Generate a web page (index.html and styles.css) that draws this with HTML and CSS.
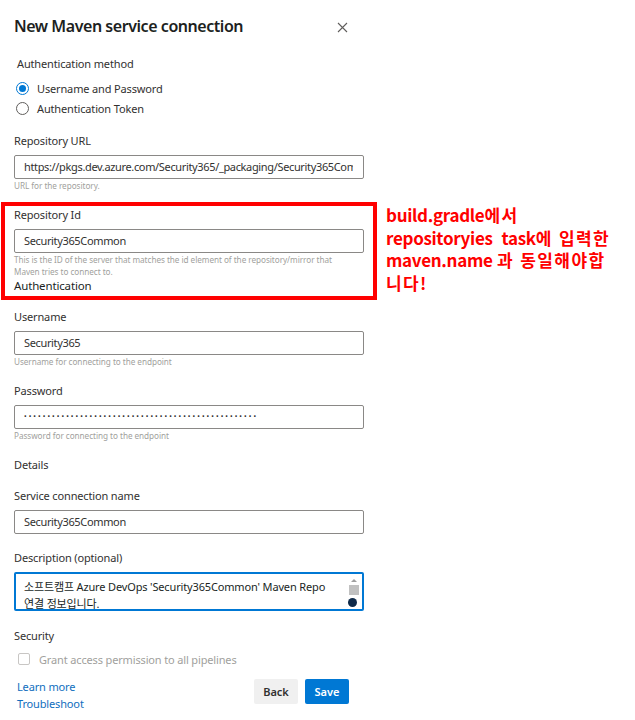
FILE: index.html
```html
<!DOCTYPE html>
<html lang="ko">
<head>
<meta charset="utf-8">
<title>New Maven service connection</title>
<link rel="stylesheet" href="styles.css">
</head>
<body>
<div class="page">
  <div class="dialog">
    <header class="head">
      <h1 class="title">New Maven service connection</h1>
      <span class="close"><svg width="11" height="11" viewBox="0 0 11 11"><path d="M1 1L10 10M10 1L1 10" stroke="#605e5c" stroke-width="1.1" fill="none"/></svg></span>
    </header>

    <div class="group-label">Authentication method</div>
    <div class="radios">
      <div class="radio on"><span class="circle"></span>Username and Password</div>
      <div class="radio"><span class="circle"></span>Authentication Token</div>
    </div>

    <div class="field f-url">
      <div class="label">Repository URL</div>
      <div class="input"><span class="val">https://pkgs.dev.azure.com/Security365/_packaging/Security365Common/maven/v1</span></div>
      <div class="help">URL for the repository.</div>
    </div>

    <div class="field f-id">
      <div class="label">Repository Id</div>
      <div class="input"><span class="val">Security365Common</span></div>
      <div class="help">This is the ID of the server that matches the id element of the repository/mirror that<br>Maven tries to connect to.</div>
      <div class="sub-head">Authentication</div>
    </div>

    <div class="field f-user">
      <div class="label">Username</div>
      <div class="input"><span class="val">Security365</span></div>
      <div class="help">Username for connecting to the endpoint</div>
    </div>

    <div class="field f-pass">
      <div class="label">Password</div>
      <div class="input dots"><span class="val">••••••••••••••••••••••••••••••••••••••••••••••••••</span></div>
      <div class="help">Password for connecting to the endpoint</div>
    </div>

    <div class="group-label plain f-details">Details</div>

    <div class="field f-name">
      <div class="label">Service connection name</div>
      <div class="input"><span class="val">Security365Common</span></div>
    </div>

    <div class="field f-desc">
      <div class="label">Description (optional)</div>
      <div class="textarea">
        <div class="ta-text">소프트캠프 Azure DevOps 'Security365Common' Maven Repo<br>연결 정보입니다.<br><span class="caret"></span></div>
        <div class="scroll">
          <span class="arrow"></span>
          <span class="thumb"></span>
          <span class="blob"></span>
        </div>
      </div>
    </div>

    <div class="group-label plain f-sec">Security</div>
    <div class="check"><span class="box"></span>Grant access permission to all pipelines</div>

    <footer class="foot">
      <div class="links">
        <a class="link">Learn more</a>
        <a class="link">Troubleshoot</a>
      </div>
      <div class="buttons">
        <button class="btn back">Back</button>
        <button class="btn save">Save</button>
      </div>
    </footer>
  </div>

  <div class="mark"></div>
  <div class="note">build.gradle<span class="ko">에서</span><br>repositoryies&nbsp; task<span class="ko">에 입력한</span><br>maven.name <span class="ko">과 동일해야합</span><br><span class="ko">니다</span>!</div>
</div>
</body>
</html>
```

FILE: styles.css
```css
* { box-sizing: border-box; }
html, body { margin: 0; padding: 0; background: #fff; }
body { font-family: "Noto Sans", "Noto Sans CJK KR", sans-serif; color: #323130; letter-spacing: -0.15px; }

.page { position: relative; width: 635px; height: 720px; overflow: hidden; }

.dialog { width: 380px; padding-left: 14px; display: flex; flex-direction: column; }

.head { display: flex; justify-content: space-between; align-items: flex-start; width: 350px; }
.title { margin: 14px 0 0; font-size: 16px; line-height: 24px; font-weight: 600; color: #201f1e; letter-spacing: -0.45px; }
.close { margin-top: 22px; margin-right: 16px; width: 11px; height: 11px; display: flex; }

.group-label { margin-top: 18px; padding-left: 3px; font-size: 11px; line-height: 16px; }
.group-label.plain { padding-left: 0; }

.radios { margin-top: 6px; padding-left: 2px; display: flex; flex-direction: column; }
.radio { height: 20px; display: flex; align-items: center; font-size: 11px; }
.radio .circle { width: 13px; height: 13px; border-radius: 50%; border: 1px solid #605e5c; margin-right: 8px; position: relative; flex: none; }
.radio.on .circle { border-color: #0078d4; }
.radio.on .circle::after { content: ""; position: absolute; left: 2px; top: 2px; width: 7px; height: 7px; border-radius: 50%; background: #0078d4; }

.field { display: flex; flex-direction: column; width: 350px; }
.label { font-size: 11px; line-height: 16px; }
.input { margin-top: 6px; height: 24px; border: 1px solid #8a8886; border-radius: 2px; padding: 0 10px 0 9px; font-size: 11px; line-height: 22px; color: #323130; letter-spacing: -0.35px; display: flex; }
.input .val { flex: 1; min-width: 0; white-space: nowrap; overflow: hidden; }
.input.dots { font-size: 7px; letter-spacing: 2.05px; line-height: 22px; }
.help { margin-top: 1px; font-size: 8.2px; line-height: 12px; color: #a19f9d; letter-spacing: -0.05px; }
.sub-head { font-size: 11.5px; line-height: 16px; color: #201f1e; }

.f-url { margin-top: 15px; }
.f-id { margin-top: 15px; }
.f-user { margin-top: 15px; }
.f-pass { margin-top: 15px; }
.f-details { margin-top: 15px; }
.f-name { margin-top: 15px; }
.f-desc { margin-top: 16px; }
.f-sec { margin-top: 17px; }

.textarea { margin-top: 6px; height: 39px; border: 2px solid #0078d4; border-radius: 2px; display: flex; overflow: hidden; }
.ta-text { flex: 1; padding: 4px 0 0 8px; font-size: 11px; line-height: 17px; color: #201f1e; white-space: nowrap; }
.caret { display: inline-block; width: 1px; height: 10px; background: #201f1e; vertical-align: top; }
.scroll { width: 12px; margin-right: 2px; display: flex; flex-direction: column; align-items: center; position: relative; }
.arrow { margin-top: 5px; width: 0; height: 0; border-left: 3px solid transparent; border-right: 3px solid transparent; border-bottom: 3px solid #a0a0a0; }
.thumb { margin-top: 3px; width: 10px; height: 10px; background: #c1c1c1; }
.blob { position: absolute; left: 0; top: 24px; width: 9px; height: 9px; border-radius: 50%; background: #0f2a4a; }

.check { margin-top: 7px; height: 16px; padding-left: 4px; display: flex; align-items: center; font-size: 11px; color: #a19f9d; }
.check .box { width: 12px; height: 12px; border: 1px solid #c8c6c4; border-radius: 2px; margin-right: 9px; }

.foot { margin-top: 11px; width: 335px; display: flex; justify-content: space-between; align-items: flex-start; }
.links { display: flex; flex-direction: column; padding-left: 3px; }
.link { font-size: 11px; line-height: 17px; color: #106ebe; text-decoration: none; }
.buttons { margin-top: 1px; display: flex; gap: 7px; }
.btn { height: 25px; border: none; border-radius: 2px; font-family: inherit; font-size: 11px; font-weight: 600; padding: 0; cursor: default; }
.back { width: 44px; background: #f0f0f0; color: #323130; }
.save { width: 44px; background: #0078d4; color: #fff; }

.mark { position: absolute; left: 1px; top: 202px; width: 376px; height: 98px; border: 4px solid #ff0000; }
.note { position: absolute; left: 386px; top: 204px; font-family: "Noto Sans CJK KR", sans-serif; font-weight: 700; font-size: 17px; line-height: 22.5px; letter-spacing: -0.3px; color: #ff0000; white-space: nowrap; }
.note .ko { letter-spacing: 1.4px; }
```
